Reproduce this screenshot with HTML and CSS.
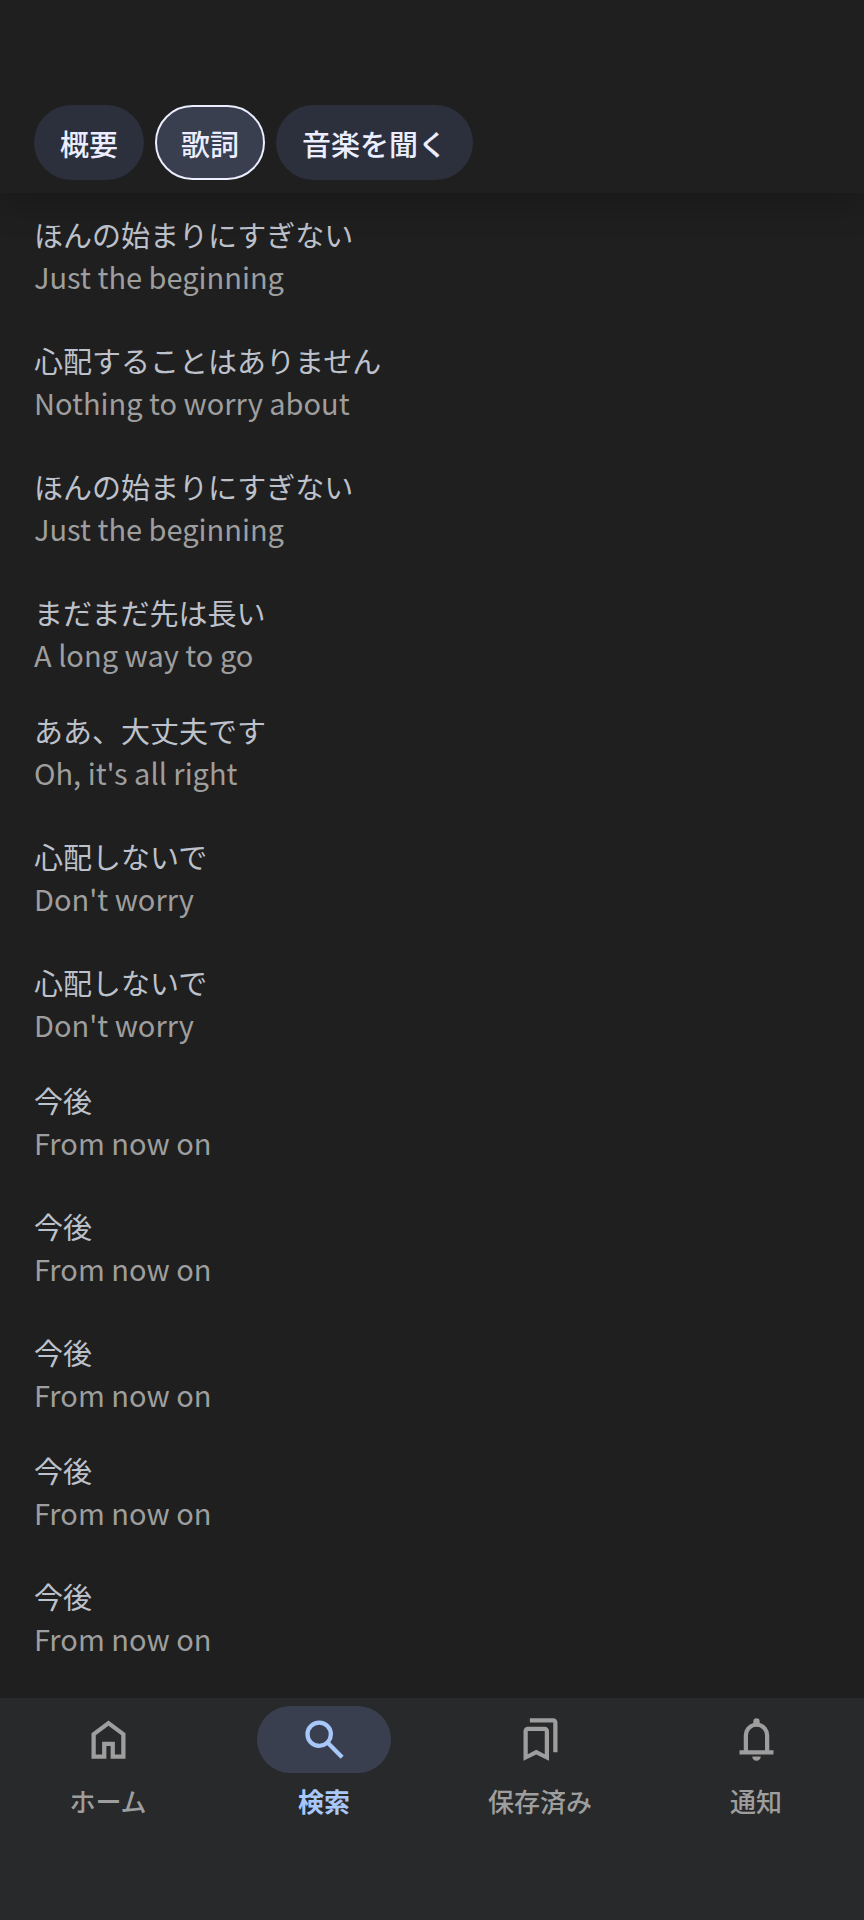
FILE: index.html
```html
<!DOCTYPE html>
<html lang="ja">
<head>
    <meta charset="UTF-8">
    <meta name="viewport" content="width=device-width, initial-scale=1.0">
    <title>歌詞</title>
    <link rel="stylesheet" href="styles.css">
</head>
<body>
    <header class="top-bar">
        <div class="chips">
            <button class="chip" type="button">概要</button>
            <button class="chip selected" type="button" aria-pressed="true">歌詞</button>
            <button class="chip" type="button">音楽を聞く</button>
        </div>
    </header>

    <main class="lyrics">
        <section class="stanza">
            <p class="line">ほんの始まりにすぎない<span class="original" lang="en">Just the beginning</span></p>
            <p class="line">心配することはありません<span class="original" lang="en">Nothing to worry about</span></p>
            <p class="line">ほんの始まりにすぎない<span class="original" lang="en">Just the beginning</span></p>
            <p class="line">まだまだ先は長い<span class="original" lang="en">A long way to go</span></p>
        </section>
        <section class="stanza">
            <p class="line">ああ、大丈夫です<span class="original" lang="en">Oh, it's all right</span></p>
            <p class="line">心配しないで<span class="original" lang="en">Don't worry</span></p>
            <p class="line">心配しないで<span class="original" lang="en">Don't worry</span></p>
        </section>
        <section class="stanza">
            <p class="line">今後<span class="original" lang="en">From now on</span></p>
            <p class="line">今後<span class="original" lang="en">From now on</span></p>
            <p class="line">今後<span class="original" lang="en">From now on</span></p>
        </section>
        <section class="stanza">
            <p class="line">今後<span class="original" lang="en">From now on</span></p>
            <p class="line">今後<span class="original" lang="en">From now on</span></p>
        </section>
    </main>

    <nav class="bottom-nav">
        <a href="#home" class="nav-item">
            <span class="nav-icon">
                <svg viewBox="0 0 24 24" fill="currentColor" aria-hidden="true">
                    <path d="M6 19h3v-6h6v6h3v-9l-6-4.5L6 10v9zm-2 2V9l8-6 8 6v12h-7v-6h-2v6H4z"/>
                </svg>
            </span>
            ホーム
        </a>
        <a href="#search" class="nav-item active" aria-current="page">
            <span class="nav-icon">
                <svg viewBox="0 0 24 24" fill="currentColor" aria-hidden="true">
                    <path d="M19.6 21l-6.3-6.3A6.1 6.1 0 0 1 9.5 16 6.5 6.5 0 1 1 16 9.5a6.1 6.1 0 0 1-1.3 3.8l6.3 6.3-1.4 1.4zM9.5 14A4.5 4.5 0 1 0 9.5 5a4.5 4.5 0 0 0 0 9z"/>
                </svg>
            </span>
            検索
        </a>
        <a href="#saved" class="nav-item">
            <span class="nav-icon">
                <svg viewBox="0 0 24 24" fill="currentColor" aria-hidden="true">
                    <path d="M4 22V8a2 2 0 0 1 2-2h8a2 2 0 0 1 2 2v14l-6-3-6 3zm2-3.1l4-2.1 4 2.1V8H6v10.9zM18 18V4H7V2h11a2 2 0 0 1 2 2v14h-2z"/>
                </svg>
            </span>
            保存済み
        </a>
        <a href="#notifications" class="nav-item">
            <span class="nav-icon">
                <svg viewBox="0 0 24 24" fill="currentColor" aria-hidden="true">
                    <path d="M4 19v-2h2v-7a6 6 0 0 1 4.500-5.800v-.7a1.500 1.500 0 0 1 3 0v.7A6 6 0 0 1 18 10v7h2v2H4zm8 3a2 2 0 0 1-2-2h4a2 2 0 0 1-2 2zm-4-5h8v-7a4 4 0 0 0-8 0v7z"/>
                </svg>
            </span>
            通知
        </a>
    </nav>
</body>
</html>
```

FILE: styles.css
```css
:root {
    --bg: #1f1f1f;
    --nav-bg: #28292a;
    --chip-bg: #2c303d;
    --chip-selected: #3a3f4f;
    --chip-text: #eceeff;
    --text: #bdc1cb;
    --text-muted: #9e9e9e;
    --accent: #a8c7fa;
}

* {
    box-sizing: border-box;
}

body {
    margin: 0;
    min-height: 100vh;
    display: flex;
    flex-direction: column;
    background-color: var(--bg);
    color: var(--text);
    font-family: "Noto Sans CJK JP", sans-serif;
}

.top-bar {
    position: sticky;
    top: 0;
    padding: 105px 34px 13px;
    background-color: var(--bg);
    box-shadow: 0 12px 32px rgba(0, 0, 0, 0.2);
}

.chips {
    display: flex;
    gap: 11px;
}

.chip {
    height: 75px;
    padding: 0 24px;
    border: 2px solid transparent;
    border-radius: 38px;
    background-color: var(--chip-bg);
    color: var(--chip-text);
    font-family: inherit;
    font-size: 29px;
    font-weight: 500;
    white-space: nowrap;
    cursor: pointer;
}

.chip.selected {
    background-color: var(--chip-selected);
    border-color: var(--chip-text);
}

.lyrics {
    flex: 1;
    display: flex;
    flex-direction: column;
    gap: 34px;
    padding: 20px 34px 34px;
}

.stanza {
    display: flex;
    flex-direction: column;
    gap: 42px;
}

.line {
    margin: 0;
    font-size: 29px;
    line-height: 42px;
}

.original {
    display: block;
    color: var(--text-muted);
}

.bottom-nav {
    position: sticky;
    bottom: 0;
    display: grid;
    grid-template-columns: repeat(4, 1fr);
    padding: 8px 0 99px;
    background-color: var(--nav-bg);
}

.nav-item {
    display: flex;
    flex-direction: column;
    align-items: center;
    gap: 8px;
    color: var(--text-muted);
    font-size: 26px;
    font-weight: 500;
    line-height: 40px;
    text-decoration: none;
}

.nav-icon {
    display: flex;
    align-items: center;
    justify-content: center;
    width: 134px;
    height: 67px;
    border-radius: 34px;
}

.nav-icon svg {
    width: 51px;
    height: 51px;
}

.nav-item.active {
    color: var(--accent);
    font-weight: 700;
}

.nav-item.active .nav-icon {
    background-color: var(--chip-selected);
}
```
